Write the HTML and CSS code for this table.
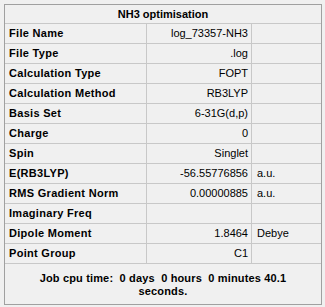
FILE: index.html
```html
<!DOCTYPE html>
<html>
<head>
<meta charset="utf-8">
<link rel="stylesheet" href="styles.css">
</head>
<body>
<div class="panel">
  <div class="title">NH3 optimisation</div>
  <div class="row"><div class="c1">File Name</div><div class="c2">log_73357-NH3</div><div class="c3"></div></div>
  <div class="row"><div class="c1">File Type</div><div class="c2">.log</div><div class="c3"></div></div>
  <div class="row"><div class="c1">Calculation Type</div><div class="c2">FOPT</div><div class="c3"></div></div>
  <div class="row"><div class="c1">Calculation Method</div><div class="c2">RB3LYP</div><div class="c3"></div></div>
  <div class="row"><div class="c1">Basis Set</div><div class="c2">6-31G(d,p)</div><div class="c3"></div></div>
  <div class="row"><div class="c1">Charge</div><div class="c2">0</div><div class="c3"></div></div>
  <div class="row"><div class="c1">Spin</div><div class="c2">Singlet</div><div class="c3"></div></div>
  <div class="row"><div class="c1">E(RB3LYP)</div><div class="c2">-56.55776856</div><div class="c3">a.u.</div></div>
  <div class="row"><div class="c1">RMS Gradient Norm</div><div class="c2">0.00000885</div><div class="c3">a.u.</div></div>
  <div class="row"><div class="c1">Imaginary Freq</div><div class="c2"></div><div class="c3"></div></div>
  <div class="row"><div class="c1">Dipole Moment</div><div class="c2">1.8464</div><div class="c3">Debye</div></div>
  <div class="row"><div class="c1">Point Group</div><div class="c2">C1</div><div class="c3"></div></div>
  <div class="footer">Job cpu time:  0 days  0 hours  0 minutes 40.1<br>seconds.</div>
</div>
</body>
</html>
```
FILE: styles.css
```css
html, body {
  margin: 0;
  padding: 0;
  background: #f0f0f0;
}
body {
  font-family: "Liberation Sans", Arial, sans-serif;
  font-size: 11px;
  color: #000;
}
.panel {
  box-sizing: border-box;
  margin: 4px 0 0 4px;
  width: 318px;
  height: 301px;
  border: 1px solid #a0a0a0;
  background: #f0f0f0;
}
.title {
  box-sizing: border-box;
  height: 19px;
  line-height: 18px;
  border-bottom: 1px solid #c8c8c8;
  text-align: center;
  font-weight: bold;
}
.row {
  display: flex;
  box-sizing: border-box;
  height: 20px;
  line-height: 18px;
  border-bottom: 1px solid #c8c8c8;
}
.c1, .c2, .c3 {
  box-sizing: border-box;
  white-space: nowrap;
  overflow: hidden;
}
.c1 {
  width: 142px;
  padding-left: 4px;
  font-weight: bold;
  letter-spacing: 0.3px;
  border-right: 1px solid #c8c8c8;
}
.c2 {
  width: 105px;
  padding-right: 3px;
  text-align: right;
  border-right: 1px solid #c8c8c8;
}
.c3 {
  width: 69px;
  padding-left: 5px;
}
.footer {
  padding-top: 8px;
  line-height: 13px;
  text-align: center;
  font-weight: bold;
  letter-spacing: 0.15px;
  white-space: pre-wrap;
}
```
